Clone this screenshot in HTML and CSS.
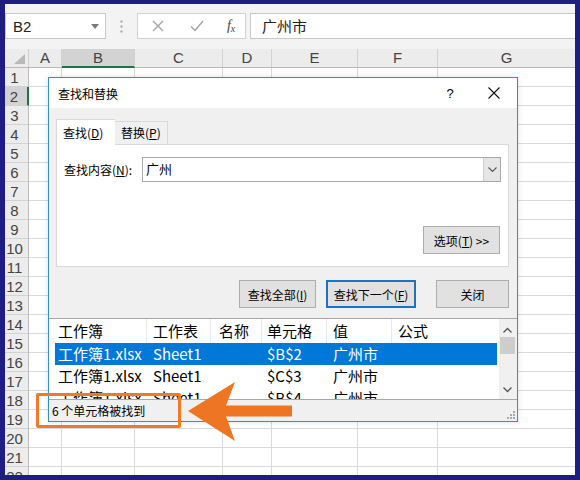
FILE: index.html
```html
<!DOCTYPE html>
<html lang="zh-CN">
<head>
<meta charset="utf-8">
<title>查找和替换</title>
<link rel="stylesheet" href="styles.css">
</head>
<body>
<div class="frame">
  <div class="fbar">
    <div class="namebox"><span>B2</span>
      <svg class="nb-arrow" width="8" height="5" viewBox="0 0 8 5"><path d="M0 0H8L4 5Z" fill="#7a7a7a"/></svg>
    </div>
    <div class="vdots"><svg width="3" height="13" viewBox="0 0 3 13"><circle cx="1.5" cy="1.5" r="1.2" fill="#b0b0b0"/><circle cx="1.5" cy="6.5" r="1.2" fill="#b0b0b0"/><circle cx="1.5" cy="11.5" r="1.2" fill="#b0b0b0"/></svg></div>
    <div class="fbtns">
      <span class="fb fb-x"><svg width="12" height="12" viewBox="0 0 12 12"><path d="M1 1L11 11M11 1L1 11" stroke="#a3a3a3" stroke-width="1.4"/></svg></span>
      <span class="fb fb-ok"><svg width="14" height="12" viewBox="0 0 14 12"><path d="M1 6.5L5 10.5L13 1" stroke="#a3a3a3" stroke-width="1.4" fill="none"/></svg></span>
      <span class="fb fb-fx"><i>f</i><i class="fx-x">x</i></span>
    </div>
    <div class="fval">广州市</div>
  </div>

  <div class="sheet">
    <div class="colhead">
      <div class="corner"><span class="tri"></span></div>
      <div class="ch w-a">A</div>
      <div class="ch w-b sel">B</div>
      <div class="ch w-c">C</div>
      <div class="ch w-d">D</div>
      <div class="ch w-e">E</div>
      <div class="ch w-f">F</div>
      <div class="ch w-g">G</div>
    </div>
    <div class="grid">
      <div class="rowhead">
        <div class="rh">1</div><div class="rh sel">2</div><div class="rh">3</div><div class="rh">4</div>
        <div class="rh">5</div><div class="rh">6</div><div class="rh">7</div><div class="rh">8</div>
        <div class="rh">9</div><div class="rh">10</div><div class="rh">11</div><div class="rh">12</div>
        <div class="rh">13</div><div class="rh">14</div><div class="rh">15</div><div class="rh">16</div>
        <div class="rh">17</div><div class="rh">18</div><div class="rh">19</div><div class="rh">20</div>
        <div class="rh">21</div><div class="rh">22</div>
      </div>
      <div class="col w-a"></div>
      <div class="col w-b"></div>
      <div class="col w-c"></div>
      <div class="col w-d"></div>
      <div class="col w-e"></div>
      <div class="col w-f"></div>
      <div class="col w-g"></div>
    </div>
  </div>

  <div class="dialog">
    <div class="dlg-title">
      <span class="dlg-name">查找和替换</span>
      <span class="dlg-help">?</span>
      <svg class="dlg-close" width="12" height="12" viewBox="0 0 12 12"><path d="M0.5 0.5L11.5 11.5M11.5 0.5L0.5 11.5" stroke="#111" stroke-width="1.1"/></svg>
    </div>
    <div class="dlg-main">
      <div class="tabs">
        <div class="tab active">查找(<u>D</u>)</div>
        <div class="tab">替换(<u>P</u>)</div>
      </div>
      <div class="panel">
        <div class="find-row">
          <label class="find-label">查找内容(<u>N</u>):</label>
          <div class="combo">
            <span class="combo-text">广州</span>
            <span class="combo-btn"><svg width="9" height="6" viewBox="0 0 9 6"><path d="M0.5 0.5L4.5 4.5L8.5 0.5" stroke="#555" stroke-width="1.1" fill="none"/></svg></span>
          </div>
        </div>
        <div class="opt-row">
          <button class="btn btn-opt">选项(<u>T</u>) &gt;&gt;</button>
        </div>
      </div>
      <div class="btn-row">
        <button class="btn btn-all">查找全部(<u>I</u>)</button>
        <button class="btn btn-next">查找下一个(<u>F</u>)</button>
        <button class="btn btn-close">关闭</button>
      </div>
    </div>
    <div class="results">
      <div class="res-table">
        <div class="res-row res-head">
          <span>工作簿</span><span>工作表</span><span>名称</span><span>单元格</span><span>值</span><span>公式</span>
        </div>
        <div class="res-row selected">
          <span>工作簿1.xlsx</span><span>Sheet1</span><span></span><span>$B$2</span><span>广州市</span><span></span>
        </div>
        <div class="res-row">
          <span>工作簿1.xlsx</span><span>Sheet1</span><span></span><span>$C$3</span><span>广州市</span><span></span>
        </div>
        <div class="res-row">
          <span>工作簿1.xlsx</span><span>Sheet1</span><span></span><span>$B$4</span><span>广州市</span><span></span>
        </div>
      </div>
      <div class="vscroll">
        <svg class="sb-up" width="9" height="6" viewBox="0 0 9 6"><path d="M0.5 5.5L4.5 1.5L8.5 5.5" stroke="#555" stroke-width="1.3" fill="none"/></svg>
        <span class="sb-thumb"></span>
        <svg class="sb-down" width="9" height="6" viewBox="0 0 9 6"><path d="M0.5 0.5L4.5 4.5L8.5 0.5" stroke="#555" stroke-width="1.3" fill="none"/></svg>
      </div>
    </div>
    <div class="status">
      <span>6 个单元格被找到</span>
      <svg class="grip" width="8" height="8" viewBox="0 0 8 8"><g fill="#a8a8a8"><rect x="6" y="0" width="2" height="2"/><rect x="3" y="3" width="2" height="2"/><rect x="6" y="3" width="2" height="2"/><rect x="0" y="6" width="2" height="2"/><rect x="3" y="6" width="2" height="2"/><rect x="6" y="6" width="2" height="2"/></g></svg>
    </div>
  </div>

  <div class="hl-box"></div>
  <svg class="arrow" width="570" height="471" viewBox="5 4 570 471">
    <path d="M188 411 L235 382 L226 405.5 L292 405.5 L292 416.5 L226 416.5 L235 441 Z" fill="#ee7623"/>
  </svg>
</div>
</body>
</html>
```

FILE: styles.css
```css
* { box-sizing: border-box; }
html, body { margin: 0; padding: 0; }
body {
  width: 580px;
  height: 480px;
  overflow: hidden;
  background: #1e1e82;
  font-family: "Noto Sans CJK SC", "Noto Sans", sans-serif;
}
.frame {
  position: relative;
  margin: 4px 5px 5px 5px;
  width: 570px;
  height: 471px;
  background: #fff;
  overflow: hidden;
}

/* formula bar */
.fbar {
  height: 45px;
  background: #f3f3f3;
  display: flex;
  align-items: flex-start;
  padding-top: 9px;
}
.namebox {
  width: 101px;
  height: 26px;
  background: #fff;
  border: 1px solid #c9c9c9;
  display: flex;
  align-items: center;
  justify-content: space-between;
  padding: 0 6px 0 7px;
  font: 15px "Liberation Sans", sans-serif;
  color: #222;
}
.vdots {
  width: 31px;
  height: 26px;
  display: flex;
  align-items: center;
  justify-content: center;
}
.fbtns {
  width: 109px;
  height: 26px;
  background: #fff;
  border: 1px solid #d2d2d2;
  display: flex;
  align-items: center;
}
.fb { display: flex; justify-content: center; align-items: center; }
.fb-x, .fb-ok { width: 40px; }
.fb-fx {
  width: 28px;
  font: italic 14px "Liberation Serif", serif;
  color: #444;
}
.fx-x { font-size: 10px; margin-top: 4px; }
.fval {
  flex: 1;
  margin-left: 4px;
  height: 26px;
  background: #fff;
  border: 1px solid #c9c9c9;
  border-right: none;
  padding-left: 11px;
  font-size: 15px;
  line-height: 23px;
  color: #222;
}

/* sheet */
.colhead {
  display: flex;
  height: 19px;
  background: #ececec;
  border-bottom: 1px solid #bdb6b2;
}
.corner {
  width: 24px;
  position: relative;
  border-right: 1px solid #cfcfcf;
}
.tri {
  position: absolute;
  right: 3px;
  bottom: 3px;
  width: 0;
  height: 0;
  border-left: 11px solid transparent;
  border-bottom: 10px solid #b9b9b9;
}
.ch {
  border-right: 1px solid #d2d2d2;
  text-align: center;
  font: 15px "Liberation Sans", sans-serif;
  color: #444;
  line-height: 18px;
}
.ch.sel {
  background: #d3d3d3;
  border-bottom: 2px solid #217346;
  margin-bottom: -1px;
}
.w-a { width: 33px; }
.w-b { width: 73px; }
.w-c { width: 88px; }
.w-d { width: 49px; }
.w-e { width: 86px; }
.w-f { width: 80px; }
.w-g { width: 137px; }
.ch.w-g { border-right: none; }

.grid { display: flex; height: 420px; }
.rowhead {
  width: 24px;
  background: #ececec;
  border-right: 1px solid #bdbdbd;
}
.rh {
  height: 19px;
  border-bottom: 1px solid #d2d2d2;
  text-align: center;
  padding-right: 4px;
  font: 15px "Liberation Sans", sans-serif;
  line-height: 19px;
  color: #444;
}
.rh.sel {
  background: #d3d3d3;
  border-right: 2px solid #217346;
  margin-right: -1px;
}
.col {
  border-right: 1px solid #dadada;
  background: repeating-linear-gradient(to bottom, transparent 0 18px, #dadada 18px 19px);
}
.col.w-g { border-right: none; }

/* dialog */
.dialog {
  position: absolute;
  left: 43px;
  top: 73px;
  width: 470px;
  height: 345px;
  border: 1px solid #3b8cc0;
  background: #f0f0f0;
  display: flex;
  flex-direction: column;
  font-size: 12px;
  color: #000;
  box-shadow: 0 0 6px rgba(0,0,0,0.12);
}
.dlg-title {
  height: 30px;
  background: #fff;
  display: flex;
  align-items: center;
  padding-left: 9px;
}
.dlg-name { flex: 1; font-size: 12px; }
.dlg-help {
  width: 12px;
  text-align: center;
  font: 13px "Liberation Sans", sans-serif;
  margin-right: 32px;
}
.dlg-close { margin-right: 17px; }

.dlg-main { padding: 11px 8px 0 7px; }
.tabs {
  display: flex;
  align-items: flex-end;
  height: 25px;
}
.tab {
  width: 53px;
  height: 23px;
  border: 1px solid #d9d9d9;
  border-left: none;
  border-bottom: none;
  padding-left: 6px;
  line-height: 22px;
  background: #f0f0f0;
}
.tab.active {
  width: 59px;
  height: 26px;
  border-left: 1px solid #d9d9d9;
  border-right: none;
  margin-bottom: -1px;
  background: #fff;
  line-height: 25px;
  position: relative;
}
.panel {
  height: 123px;
  background: #fff;
  border: 1px solid #d9d9d9;
  padding: 12px 7px 0 7px;
}
.find-row { display: flex; align-items: center; }
.find-label { width: 78px; line-height: 25px; }
.combo {
  width: 359px;
  height: 25px;
  border: 1px solid #a9a9a9;
  display: flex;
}
.combo-text {
  flex: 1;
  padding-left: 3px;
  font-size: 13px;
  line-height: 22px;
}
.combo-btn {
  width: 17px;
  background: #e6e6e6;
  border-left: 1px solid #cdcdcd;
  display: flex;
  align-items: center;
  justify-content: center;
}
.opt-row {
  display: flex;
  justify-content: flex-end;
  margin-top: 44px;
  padding-right: 1px;
}
.btn {
  height: 28px;
  background: #e1e1e1;
  border: 1px solid #adadad;
  font-family: "Noto Sans CJK SC", sans-serif;
  font-size: 12px;
  color: #000;
  padding: 0;
  margin: 0;
}
.btn-opt { width: 77px; }
.btn-row {
  display: flex;
  justify-content: flex-end;
  margin-top: 13px;
}
.btn-all { width: 77px; }
.btn-next {
  width: 90px;
  margin-left: 10px;
  border: 2px solid #1a74c4;
}
.btn-close { width: 73px; margin-left: 20px; }

.results {
  margin-top: 10px;
  height: 81px;
  background: #fff;
  border-top: 1px solid #a8a8a8;
  display: flex;
  overflow: hidden;
}
.res-table {
  flex: 1;
  padding-left: 6px;
  padding-right: 2px;
}
.res-row {
  display: grid;
  grid-template-columns: 92px 64px 51px 65px 65px 1fr;
  height: 22px;
  font-size: 15px;
  line-height: 22px;
  white-space: nowrap;
}
.res-row span { padding-left: 6px; overflow: hidden; }
.res-row span:nth-child(1) { padding-left: 3px; }
.res-row span:nth-child(3) { padding-left: 8px; }
.res-row span:nth-child(4) { padding-left: 5px; }
.res-head { height: 24px; line-height: 24px; }
.res-head span { border-right: 1px solid #e8e8e8; }
.res-head span:last-child { border-right: none; }
.res-row.selected { background: #0078d7; color: #fff; }
.vscroll {
  width: 18px;
  background: #f0f0f0;
  position: relative;
}
.sb-up { position: absolute; left: 4px; top: 8px; }
.sb-down { position: absolute; left: 4px; top: 68px; }
.sb-thumb {
  position: absolute;
  left: 1px;
  top: 18px;
  width: 15px;
  height: 17px;
  background: #cdcdcd;
}
.status {
  height: 22px;
  border-top: 1px solid #a8a8a8;
  background: #f0f0f0;
  padding-left: 3px;
  display: flex;
  align-items: center;
  justify-content: space-between;
  font-size: 12px;
}
.grip { margin-right: 2px; align-self: flex-end; margin-bottom: 2px; }

/* annotations */
.hl-box {
  position: absolute;
  left: 31px;
  top: 389px;
  width: 145px;
  height: 35px;
  border: 3px solid #ef7c24;
  border-radius: 2px;
}
.arrow {
  position: absolute;
  left: 0;
  top: 0;
}
```
